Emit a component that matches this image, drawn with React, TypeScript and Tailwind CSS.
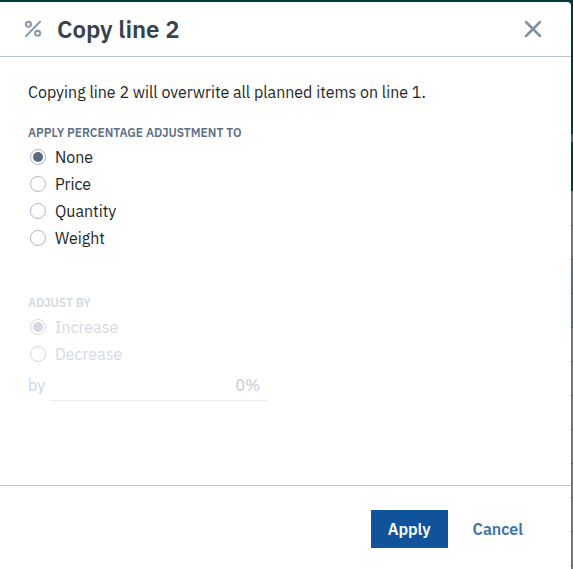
import { useState } from "react";

const targets = ["None", "Price", "Quantity", "Weight"];
const directions = ["Increase", "Decrease"];

// Page rows dimmed behind the dialog
const rows = ["plain", "plain", "selected", "selected", "plain", "plain", "plain", "plain", "plain", "plain", "plain", "plain"];

type RadioGroupProps = {
  name: string;
  legend: string;
  options: string[];
  value: string;
  disabled?: boolean;
  onChange: (value: string) => void;
};

function RadioGroup({ name, legend, options, value, disabled, onChange }: RadioGroupProps) {
  return (
    <fieldset disabled={disabled} className="group">
      <legend className="text-xs leading-5 font-semibold text-[#5c6f88] uppercase group-disabled:text-[#d5dade]">
        {legend}
      </legend>
      {options.map((option) => (
        <label
          key={option}
          className="flex h-[27px] w-fit items-center gap-[9px] pl-[2px] text-base text-[#252627] group-disabled:text-[#d5dadf]"
        >
          <input
            type="radio"
            name={name}
            value={option}
            checked={value === option}
            onChange={() => onChange(option)}
            className="grid size-4 appearance-none place-items-center rounded-full border border-[#adb8c8] before:size-[10px] before:rounded-full checked:before:bg-[#5c6b80] disabled:border-[#d5dade] disabled:checked:before:bg-[#d3d9de]"
          />
          {option}
        </label>
      ))}
    </fieldset>
  );
}

export default function App() {
  const [target, setTarget] = useState("None");
  const [direction, setDirection] = useState("Increase");
  const [amount, setAmount] = useState("0%");
  const off = target === "None";

  return (
    <div className="relative flex min-h-screen flex-col overflow-hidden bg-[#737575] pt-[2px] pr-[2px] font-['IBM_Plex_Sans',Roboto,sans-serif]">
      <div aria-hidden="true" className="absolute inset-0">
        <div className="flex h-[192px] justify-end border-b border-[#737575] bg-[#003b39] pt-[134px]">
          <div className="h-2 w-[2px] bg-[#3f6462]" />
        </div>
        {rows.map((row, i) => (
          <div
            key={i}
            className={row === "selected" ? "h-[34px] border-b border-[#4b5054] bg-[#626c74]" : "h-[34px] border-b border-[#555757] bg-[#737575]"}
          />
        ))}
      </div>

      <div role="dialog" aria-labelledby="title" className="relative flex flex-1 flex-col rounded-tr bg-white">
        <header className="flex items-center border-b border-[#b9c3d0] pr-[29px] pl-6">
          <svg viewBox="0 0 18 18" className="size-[18px] text-[#8794a2]" fill="none" stroke="currentColor" strokeWidth="1.9" strokeLinecap="round" aria-hidden="true">
            <circle cx="4.4" cy="4.3" r="2.6" />
            <circle cx="13.6" cy="13.3" r="2.6" />
            <path d="M16.1 1.6 1.9 16.2" />
          </svg>
          <h2 id="title" className="flex-1 pl-[15px] text-2xl leading-[54px] font-semibold text-[#36424e]">
            Copy line 2
          </h2>
          <button type="button" aria-label="Close" className="text-[#8391a0]">
            <svg viewBox="0 0 18 18" className="size-[18px]" fill="none" stroke="currentColor" strokeWidth="2.5" strokeLinecap="round">
              <path d="M2 2 16 16M16 2 2 16" />
            </svg>
          </button>
        </header>

        <main className="flex-1 px-7 pt-[23px]">
          <p className="mb-[19px] text-base text-[#252627]">
            Copying line 2 will overwrite all planned items on line 1.
          </p>
          <RadioGroup name="target" legend="Apply percentage adjustment to" options={targets} value={target} onChange={setTarget} />
          <div className="pt-[42px]">
            <RadioGroup name="direction" legend="Adjust by" options={directions} value={direction} disabled={off} onChange={setDirection} />
            <label className="mt-[2px] flex w-60 items-center gap-[5px] text-base text-[#d0d6dc]">
              by
              <input
                type="text"
                value={amount}
                disabled={off}
                onChange={(e) => setAmount(e.target.value)}
                className="h-8 min-w-0 flex-1 border-b border-[#eceef0] pr-2 text-right text-[#c1c8d2]"
              />
            </label>
          </div>
        </main>

        <footer className="flex justify-end gap-[25px] border-t border-[#bcc7d2] pt-6 pr-12 pb-[21px]">
          <button type="button" className="h-[38px] bg-[#10539a] px-[17px] text-base font-semibold text-white">
            Apply
          </button>
          <button type="button" className="text-base font-semibold text-[#3a73ae]">
            Cancel
          </button>
        </footer>
      </div>
    </div>
  );
}
